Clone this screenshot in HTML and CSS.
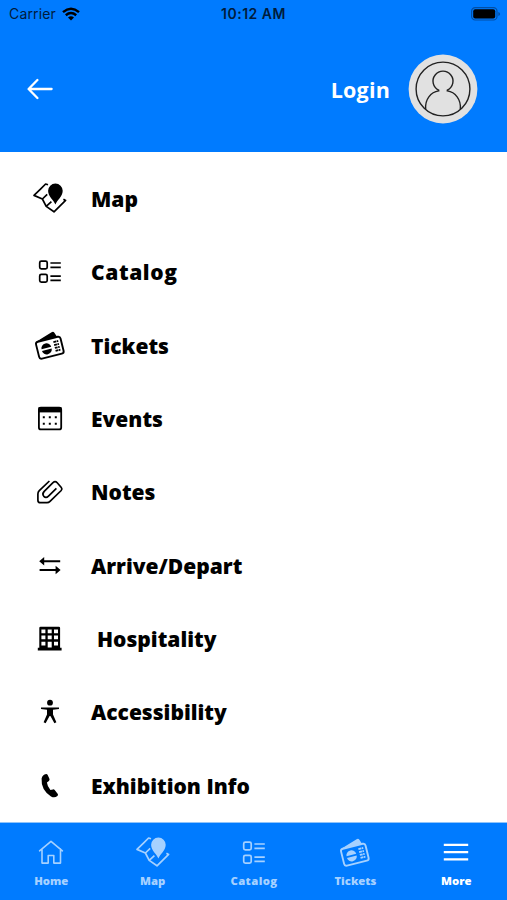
FILE: index.html
```html
<!DOCTYPE html>
<html lang="en">
<head>
  <meta charset="UTF-8">
  <meta name="viewport" content="width=device-width, initial-scale=1.0">
  <title>More</title>
  <link rel="stylesheet" href="styles.css">
</head>
<body>
  <!-- Icons shared by the menu and the tab bar -->
  <svg class="sprite" xmlns="http://www.w3.org/2000/svg">
    <symbol id="icon-map" viewBox="0 0 36 36">
      <path d="M16 2.8L13.6 2L9 6.6L2 13.4L10.4 17L14.2 24.4L22 29.8L33.6 18.4L31.4 17.2M10.4 17L15.2 12.4M14.2 24.4L19.4 19.6" fill="none" stroke="currentColor" stroke-width="1.7" stroke-linejoin="round"/>
      <path d="M23.4 22.6C21.8 18.2 16.1 14.6 16.1 8.8a7.3 7.3 0 0 1 14.6 0C30.7 14.6 25 18.2 23.4 22.6z" fill="currentColor"/>
    </symbol>
    <symbol id="icon-catalog" viewBox="0 0 36 36">
      <g fill="none" stroke="currentColor" stroke-width="1.7">
        <rect x="7.7" y="6.1" width="7.5" height="7.8" rx="1.6"/>
        <rect x="7.7" y="19.4" width="7.5" height="7.8" rx="1.6"/>
        <path d="M18.4 8H28.8M18.4 12.3H28.8M18.4 21.1H28.8M18.4 25.4H28.8"/>
      </g>
    </symbol>
    <symbol id="icon-tickets" viewBox="0 0 36 36">
      <path d="M4.6 12.6L19.6 3.2Q21.4 2.2 22.4 3.8L25 7.8Z" fill="currentColor"/>
      <g transform="rotate(-14 17.8 18.6)">
        <rect x="5.2" y="10" width="25.2" height="17.4" rx="2.4" fill="none" stroke="currentColor" stroke-width="1.9"/>
        <path d="M9.4 18.1a5 4.6 0 0 1 10 0zM9.4 20a5 4.6 0 0 0 10 0z" fill="currentColor"/>
        <path d="M22.6 14.2h5M22.6 17.2h5M22.6 20.2h5M22.6 23.2h5" stroke="currentColor" stroke-width="1.8" stroke-dasharray="2.9 .5"/>
      </g>
    </symbol>
    <symbol id="icon-events" viewBox="0 0 36 36">
      <rect x="6.9" y="5.6" width="22.3" height="21.8" rx="2" fill="none" stroke="currentColor" stroke-width="1.8"/>
      <path d="M6.5 5.2h23v5.2h-23z" fill="currentColor"/>
      <path d="M10.8 15.3h14M10.8 21.7h14" stroke="currentColor" stroke-width="2" stroke-dasharray="2 4"/>
    </symbol>
    <symbol id="icon-notes" viewBox="0 0 36 36">
      <path d="M17.4 6L7.3 15.6Q5.9 17 5.9 19V25.2Q5.9 27.7 8.4 27.7H15Q16.7 27.7 18 26.4L29.2 15.5Q30.6 14 29.3 12.5L25.2 7.8Q23.2 5.6 21 7.6L12.2 16.4Q9.8 19 11.8 21.3Q14 23.5 16.5 21.1L24.4 13.4" fill="none" stroke="currentColor" stroke-width="1.7"/>
    </symbol>
    <symbol id="icon-arrive" viewBox="0 0 36 36">
      <path d="M10 12.2H28.2M7.6 21H26" stroke="currentColor" stroke-width="2"/>
      <path d="M7.2 12.2L12.2 8V16.4zM28.6 21L23.6 16.8V25.2z" fill="currentColor"/>
    </symbol>
    <symbol id="icon-hospitality" viewBox="0 0 36 36">
      <path fill-rule="evenodd" fill="currentColor" d="M8.6 4.8h18.2q1.3 0 1.3 1.3v19.7h1.5v2.8H5.8v-2.8h1.5V6.1q0-1.3 1.3-1.3zM9.4 7.5v3.7h4V7.5zM15.7 7.5v3.7h4V7.5zM22 7.5v3.7h4V7.5zM9.4 13.6v3.7h4v-3.7zM15.7 13.6v3.7h4v-3.7zM22 13.6v3.7h4v-3.7zM9.4 19.8v3.7h4v-3.7zM15.7 19.8v5.8h4v-5.8zM22 19.8v3.7h4v-3.7z"/>
    </symbol>
    <symbol id="icon-accessibility" viewBox="0 0 36 36">
      <circle cx="18" cy="7.7" r="2.9" fill="currentColor"/>
      <path d="M9 12.4H27V14L21 14.8V19.4L24.4 27.3L22.4 28.2L18.4 21H17.6L13.6 28.2L11.6 27.3L15 19.4V14.8L9 14z" fill="currentColor"/>
    </symbol>
    <symbol id="icon-phone" viewBox="0 0 36 36">
      <path d="M9.6 9.4Q10.4 5.4 14.2 4.9Q15.2 4.9 15.7 5.9L17.5 10Q17.8 11.2 16.9 12L14.9 13.6Q15.4 17.8 18.4 21L21 20.4Q22 20.2 22.7 21L25.8 25Q26.4 26.2 25.4 27Q22.6 29.4 19 27.5Q8.8 20.6 9.6 9.4z" fill="currentColor"/>
    </symbol>
    <symbol id="icon-home" viewBox="0 0 36 36">
      <path d="M6.6 14.8L18 5.4L29.4 14.8M9 13V27.1H15.2V19.5H20.8V27.1H27.5V13" fill="none" stroke="currentColor" stroke-width="1.6" stroke-linecap="round" stroke-linejoin="round"/>
    </symbol>
    <symbol id="icon-more" viewBox="0 0 36 36">
      <path d="M5.8 8.8H30.2M5.8 16.1H30.2M5.8 23.4H30.2" stroke="currentColor" stroke-width="2.3"/>
    </symbol>
  </svg>

  <div class="screen">
    <header class="header">
      <div class="status-bar">
        <div class="carrier">
          <span>Carrier</span>
          <svg class="wifi" viewBox="0 0 18 14">
            <path d="M1 5.1Q9-1.6 17 5.1M3.8 8.2Q9 3.9 14.2 8.2" fill="none" stroke="currentColor" stroke-width="2.5"/>
            <path d="M6 10.4Q9 8 12 10.4L9 13.6z" fill="currentColor"/>
          </svg>
        </div>
        <span class="time">10:12 AM</span>
        <svg class="battery" viewBox="0 0 30 14">
          <rect x=".6" y=".6" width="25.4" height="12.4" rx="3.6" fill="none" stroke="#024fa5" stroke-width="1.2"/>
          <rect x="2.2" y="2.2" width="22" height="9.2" rx="2" fill="#000"/>
          <path d="M27.3 5v4q1.8-.6 1.8-2t-1.8-2z" fill="#024fa5"/>
        </svg>
      </div>
      <div class="account">
        <svg class="back" viewBox="0 0 26 22">
          <path d="M24.6 11H2M10.4 2L1.6 11L10.4 20" fill="none" stroke="#fff" stroke-width="2.3" stroke-linecap="round" stroke-linejoin="round"/>
        </svg>
        <span class="login">Login</span>
        <svg class="avatar" viewBox="0 0 70 70">
          <circle cx="35" cy="35" r="34.4" fill="#e1e1e1"/>
          <g fill="none" stroke="#222" stroke-width="1.4">
            <circle cx="35" cy="35" r="26.9"/>
            <path d="M17.7 55C16.8 45.5 22.7 38.1 30.7 36.9V36.2A10 10 0 1 1 39.3 36.2V36.9C47.3 38.1 53.2 45.5 52.3 55"/>
          </g>
        </svg>
      </div>
    </header>

    <main class="menu">
      <a class="menu-item"><svg class="icon"><use href="#icon-map"/></svg><span>Map</span></a>
      <a class="menu-item"><svg class="icon"><use href="#icon-catalog"/></svg><span class="wide">Catalog</span></a>
      <a class="menu-item"><svg class="icon"><use href="#icon-tickets"/></svg><span>Tickets</span></a>
      <a class="menu-item"><svg class="icon"><use href="#icon-events"/></svg><span>Events</span></a>
      <a class="menu-item"><svg class="icon"><use href="#icon-notes"/></svg><span>Notes</span></a>
      <a class="menu-item"><svg class="icon"><use href="#icon-arrive"/></svg><span>Arrive/Depart</span></a>
      <a class="menu-item"><svg class="icon"><use href="#icon-hospitality"/></svg><span class="indent">Hospitality</span></a>
      <a class="menu-item"><svg class="icon"><use href="#icon-accessibility"/></svg><span>Accessibility</span></a>
      <a class="menu-item"><svg class="icon"><use href="#icon-phone"/></svg><span>Exhibition Info</span></a>
    </main>

    <nav class="tabs">
      <a class="tab"><svg class="icon"><use href="#icon-home"/></svg><span>Home</span></a>
      <a class="tab"><svg class="icon"><use href="#icon-map"/></svg><span>Map</span></a>
      <a class="tab"><svg class="icon"><use href="#icon-catalog"/></svg><span class="tab-wide">Catalog</span></a>
      <a class="tab"><svg class="icon"><use href="#icon-tickets"/></svg><span>Tickets</span></a>
      <a class="tab active"><svg class="icon"><use href="#icon-more"/></svg><span>More</span></a>
    </nav>
  </div>
</body>
</html>
```
FILE: styles.css
```css
* { box-sizing: border-box; }
body {
  margin: 0;
  background-color: #fff;
  color: #000;
  font-family: "Open Sans", "Noto Sans", sans-serif;
}
.sprite { display: none; }
.screen {
  display: flex;
  flex-direction: column;
  height: 900px;
  overflow: hidden;
}
.icon {
  width: 36px;
  height: 36px;
  flex: none;
}

/* Header */
.header {
  height: 152px;
  background-color: #007bff;
}
.status-bar {
  display: grid;
  grid-template-columns: 1fr auto 1fr;
  align-items: center;
  height: 27px;
  padding: 0 6px 0 9px;
  font-family: Inter, sans-serif;
  font-size: 14px;
  color: #001c3c;
}
.carrier {
  display: flex;
  align-items: center;
  gap: 6px;
  letter-spacing: .15px;
}
.wifi {
  width: 18px;
  height: 14px;
  color: #000;
}
.time {
  margin-right: 3px;
  font-weight: 600;
  letter-spacing: .5px;
}
.battery {
  width: 30px;
  height: 14px;
  justify-self: end;
}
.account {
  display: flex;
  align-items: center;
  height: 124px;
  padding: 0 29px 0 27px;
}
.back {
  width: 26px;
  height: 22px;
}
.login {
  margin-left: auto;
  margin-right: 18px;
  font-size: 21.5px;
  font-weight: 700;
  letter-spacing: .2px;
  color: #fff;
}
.avatar {
  width: 70px;
  height: 70px;
}

/* Menu */
.menu {
  flex: 1;
  padding-top: 11px;
}
.menu-item {
  display: flex;
  align-items: center;
  gap: 23px;
  height: 73.3px;
  padding-left: 32px;
  font-size: 21px;
  font-weight: 800;
}
.menu-item .icon { margin-top: 2px; }
.wide { letter-spacing: .6px; }
.indent { margin-left: 6px; }

/* Bottom tabs */
.tabs {
  display: grid;
  grid-template-columns: repeat(5, 1fr);
  height: 78px;
  border-top: 1px solid #8fc4fb;
  background-color: #007bff;
}
.tab {
  display: flex;
  flex-direction: column;
  align-items: center;
  padding-top: 13px;
  padding-left: 1px;
  font-size: 11.3px;
  line-height: 16px;
  font-weight: 800;
  color: #a6d1ff;
}
.tab .icon { margin-bottom: 1px; }
.tab-wide { letter-spacing: .4px; }
.tab.active {
  padding-left: 0;
  color: #fff;
}
```
